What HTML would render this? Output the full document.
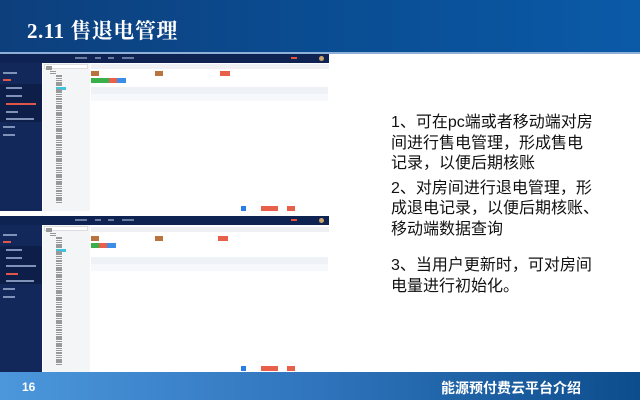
<!DOCTYPE html>
<html><head><meta charset="utf-8"><style>
*{margin:0;padding:0;box-sizing:border-box}
body{width:640px;height:400px;position:relative;overflow:hidden;background:#fff;font-family:"Liberation Sans","Noto Sans CJK SC",sans-serif}
.hdr{position:absolute;left:0;top:0;width:640px;height:52px;background:linear-gradient(90deg,#0d3f7c,#0a4f96 60%,#0b5aa8)}
.hdr h1{position:absolute;left:27px;top:15px;color:#fff;font-size:21px;font-weight:bold;font-family:"Liberation Serif","Noto Serif CJK SC",serif;letter-spacing:0.5px}
.sep{position:absolute;left:0;top:52px;width:640px;height:2px;background:#8fb0d6}
.ftr{position:absolute;left:0;top:372px;width:640px;height:28px;background:linear-gradient(90deg,#4c97dc,#2f74bc 50%,#0c4d8c)}
.ftr .n{position:absolute;left:22px;top:8px;color:#fff;font-size:12px;font-weight:bold}
.ftr .t{position:absolute;left:441px;top:6px;color:#fff;font-size:14px;font-weight:bold}
.txt{position:absolute;left:391px;top:113px;font-size:16px;line-height:20.5px;color:#111;white-space:nowrap}
.txt p{margin-bottom:4px}
.shot{position:absolute;left:0;width:329px;height:157px;background:#fff;overflow:hidden}
.nav{position:absolute;left:0;top:0;width:329px;height:9px;background:#0f2352}
.side{position:absolute;left:0;top:9px;width:42px;height:148px;background:#13285a}
.sub{position:absolute;left:0;width:42px;height:38px;background:#0d1f48}
.si{position:absolute;height:2px;background:#7f92b8}
.tree{position:absolute;left:43px;top:9px;width:47px;height:148px;background:#f4f5f7}
.bc{position:absolute;left:91px;top:10px;width:238px;height:5px;background:#eef0f3}
.b{position:absolute;height:5px}
.th{position:absolute;left:91px;width:237px;height:7px;background:#eef1f5}
.tr{position:absolute;left:91px;width:237px;height:7px;background:#f6f8fb}
.ti{position:absolute;height:1.5px;background:#999;width:6px}
.nt{position:absolute;top:3px;height:2px;background:#6a7aa0}
</style></head><body>
<div class="hdr"><h1>2.11 售退电管理</h1></div>
<div class="sep"></div>

<div class="shot" style="top:54px" id="s1">
 <div class="nav"></div>
 <div class="nt" style="left:75px;width:12px"></div><div class="nt" style="left:95px;width:6px"></div><div class="nt" style="left:108px;width:6px"></div><div class="nt" style="left:122px;width:12px"></div>
 <div style="position:absolute;left:291px;top:3px;width:6px;height:2px;background:#e5533d"></div>
 <div style="position:absolute;left:319px;top:2px;width:5px;height:5px;border-radius:50%;background:#c9a36a"></div>
 <div class="side"></div>
 <div class="sub" style="top:30px"></div>
 <div class="si" style="left:3px;top:18px;width:14px"></div>
 <div class="si" style="left:3px;top:25px;width:8px;background:#e0574a"></div>
 <div class="si" style="left:6px;top:33px;width:16px"></div>
 <div class="si" style="left:6px;top:41px;width:16px"></div>
 <div class="si" style="left:6px;top:49px;width:30px;background:#e0574a"></div>
 <div class="si" style="left:6px;top:57px;width:12px"></div>
 <div class="si" style="left:6px;top:64px;width:28px"></div>
 <div class="si" style="left:3px;top:72px;width:12px"></div>
 <div class="si" style="left:3px;top:80px;width:12px"></div>
 <div class="tree"></div>
 <div style="position:absolute;left:44px;top:10px;width:44px;height:5px;background:#fff;border:1px solid #ddd"></div>
 <div class="bc"></div>
 <div class="b" style="left:91px;top:17px;width:8px;background:#b8743c"></div>
 <div class="b" style="left:155px;top:17px;width:8px;background:#b8743c"></div>
 <div class="b" style="left:220px;top:17px;width:10px;background:#e8604a"></div>
 <div class="b" style="left:91px;top:24px;width:18px;background:#3ab04a"></div>
 <div class="b" style="left:109px;top:24px;width:8px;background:#e8604a"></div>
 <div class="b" style="left:117px;top:24px;width:9px;background:#3a8de8"></div>
 <div class="th" style="top:33px"></div>
 <div class="tr" style="top:40px"></div>
 <div style="position:absolute;left:241px;top:152px;width:5px;height:5px;background:#2d7de8"></div>
 <div style="position:absolute;left:261px;top:152px;width:17px;height:5px;background:#e8604a"></div>
 <div style="position:absolute;left:287px;top:152px;width:8px;height:5px;background:#e8604a"></div>
</div>

<div class="shot" style="top:216px" id="s2">
 <div class="nav"></div>
 <div class="nt" style="left:75px;width:12px"></div><div class="nt" style="left:95px;width:6px"></div><div class="nt" style="left:108px;width:6px"></div><div class="nt" style="left:122px;width:12px"></div>
 <div style="position:absolute;left:291px;top:3px;width:6px;height:2px;background:#e5533d"></div>
 <div style="position:absolute;left:319px;top:2px;width:5px;height:5px;border-radius:50%;background:#c9a36a"></div>
 <div class="side"></div>
 <div class="sub" style="top:30px"></div>
 <div class="si" style="left:3px;top:18px;width:14px"></div>
 <div class="si" style="left:3px;top:25px;width:8px;background:#e0574a"></div>
 <div class="si" style="left:6px;top:33px;width:16px"></div>
 <div class="si" style="left:6px;top:41px;width:16px"></div>
 <div class="si" style="left:6px;top:49px;width:30px"></div>
 <div class="si" style="left:6px;top:57px;width:12px;background:#e0574a"></div>
 <div class="si" style="left:6px;top:64px;width:28px"></div>
 <div class="si" style="left:3px;top:72px;width:12px"></div>
 <div class="si" style="left:3px;top:80px;width:12px"></div>
 <div class="tree"></div>
 <div style="position:absolute;left:44px;top:10px;width:44px;height:5px;background:#fff;border:1px solid #ddd"></div>
 <div class="bc" style="top:11px"></div>
 <div class="b" style="left:91px;top:20px;width:8px;background:#b8743c"></div>
 <div class="b" style="left:155px;top:20px;width:8px;background:#b8743c"></div>
 <div class="b" style="left:218px;top:20px;width:10px;background:#e8604a"></div>
 <div class="b" style="left:91px;top:27px;width:8px;background:#3ab04a"></div>
 <div class="b" style="left:99px;top:27px;width:8px;background:#e8604a"></div>
 <div class="b" style="left:107px;top:27px;width:9px;background:#3a8de8"></div>
 <div class="th" style="top:41px"></div>
 <div class="tr" style="top:48px"></div>
 <div style="position:absolute;left:241px;top:150px;width:5px;height:5px;background:#2d7de8"></div>
 <div style="position:absolute;left:261px;top:150px;width:17px;height:5px;background:#e8604a"></div>
 <div style="position:absolute;left:287px;top:150px;width:8px;height:5px;background:#e8604a"></div>
</div>

<div class="txt">
<p>1、可在pc端或者移动端对房<br>间进行售电管理，形成售电<br>记录，以便后期核账</p>
<p>2、对房间进行退电管理，形<br>成退电记录，以便后期核账、<br>移动端数据查询</p>
<p style="margin-top:16px">3、当用户更新时，可对房间<br>电量进行初始化。</p>
</div>

<div class="ftr"><span class="n">16</span><span class="t">能源预付费云平台介绍</span></div>
<script>
['s1','s2'].forEach(function(id){var s=document.getElementById(id);
for(var i=0;i<60;i++){var d=document.createElement('div');d.className='ti';
var y=12+i*2.3;if(y>155)break;d.style.top=y+'px';d.style.left=(i<2?46:i<4?50:56)+'px';
if(i==9){d.style.background='#3cc4e0';d.style.width='10px';d.style.height='3px'}
s.appendChild(d);}});
</script>
</body></html>
